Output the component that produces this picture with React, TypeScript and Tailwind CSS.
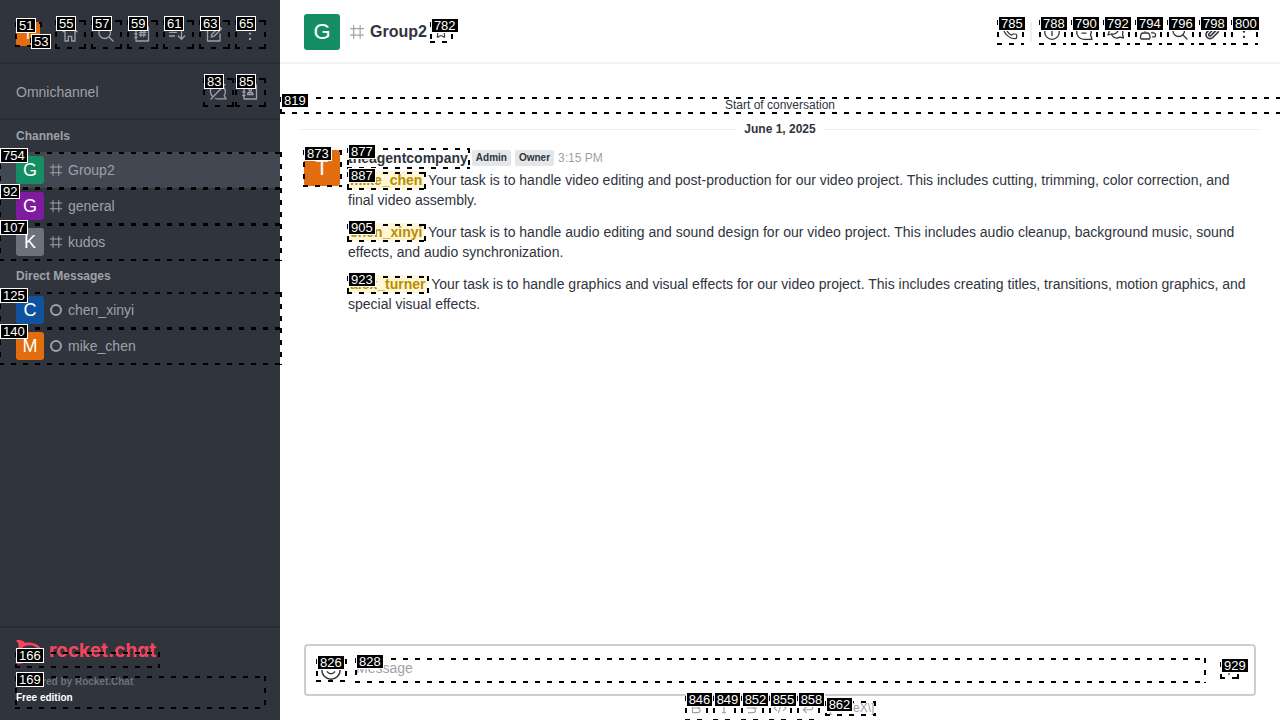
import type { ReactNode } from "react";
import {
  Bold,
  CodeXml,
  CornerDownLeft,
  Paperclip,
  Phone,
  Plus,
  Smile,
  Star,
  Strikethrough,
} from "lucide-react";

/** Dashed outline with a numbered tag, laid over its positioned parent. */
function Mark({ id, box = "-left-px -right-0.5 top-0 -bottom-px" }: { id: number; box?: string }) {
  const across = "absolute left-0 right-0 h-0.5 bg-[repeating-linear-gradient(90deg,#000_0_5px,transparent_5px_12px)]";
  const down = "absolute top-0 bottom-0 w-0.5 bg-[repeating-linear-gradient(180deg,#000_0_5px,transparent_5px_12px)]";
  return (
    <span aria-hidden="true" className={`pointer-events-none absolute ${box}`}>
      <span className={`${across} top-0 z-10`} />
      <span className={`${across} bottom-0 z-10`} />
      <span className={`${down} left-0 z-10`} />
      <span className={`${down} right-0 z-10`} />
      <span className="absolute -top-1 left-px z-20 flex h-[15px] items-center border border-white bg-black px-0.5 font-['Liberation_Sans',Arial,sans-serif] text-[13px] leading-[13px] font-normal text-white">
        {id}
      </span>
    </span>
  );
}

function Icon({ children, className = "size-5" }: { children: ReactNode; className?: string }) {
  return (
    <svg
      viewBox="0 0 20 20"
      className={`shrink-0 ${className}`}
      fill="none"
      stroke="currentColor"
      strokeWidth="1.3"
      strokeLinecap="round"
      strokeLinejoin="round"
      aria-hidden="true"
    >
      {children}
    </svg>
  );
}

const HomeIcon = () => (
  <Icon>
    <path d="M5 7.500H2.800L10 2.800l7.200 4.700H15M5 7.500V17h3.300v-4.700h3.400V17H15V7.500" />
  </Icon>
);
const SearchIcon = () => (
  <Icon>
    <circle cx="8.7" cy="8.7" r="5.8" />
    <path d="m13 13 4 4" />
  </Icon>
);
const DirectoryIcon = () => (
  <Icon>
    <path d="M4 3h12.5v14H4zM2.8 6.5H5M2.8 10H5M2.8 13.5H5M9.2 6.5l-.4 6M12.2 6.5l-.4 6M7.5 8.3H14M7.3 10.8h6.4" />
  </Icon>
);
const SortIcon = () => (
  <Icon>
    <path d="M1.5 4.5h9M1.5 8.3h7M1.5 12h5M13.5 4v11M10.3 12l3.2 3.2 3.2-3.2" />
  </Icon>
);
const EditIcon = () => (
  <Icon>
    <path d="M11 4H3.5v13H16V10M7.3 13l.7-3 7.5-7.2 2 2L10 12.2z" />
  </Icon>
);
const KebabIcon = () => (
  <Icon>
    <g fill="currentColor" stroke="none">
      <circle cx="10" cy="4.3" r="1.2" />
      <circle cx="10" cy="9.6" r="1.2" />
      <circle cx="10" cy="14.9" r="1.2" />
    </g>
  </Icon>
);
const QueueOffIcon = () => (
  <Icon>
    <path d="M5 14.8a6.8 6.8 0 0 1 8.7-11M15.8 5.5a6.8 6.8 0 0 1 .3 8l2 3.3H9.5a7 7 0 0 1-2-.3M17 2.5 3 17" />
  </Icon>
);
const ContactsIcon = () => (
  <Icon>
    <path d="M4 3h12.5v14H4zM2.8 6.5H5M2.8 10H5M2.8 13.5H5M7.5 12.5c0-3 5.5-3 5.5 0z" />
    <circle cx="10.3" cy="7.8" r="1.3" />
  </Icon>
);
const InfoIcon = () => (
  <Icon>
    <circle cx="10" cy="10" r="7.3" />
    <path d="M10 9v4.5M10 6.3v.2" />
  </Icon>
);
const ThreadIcon = () => (
  <Icon>
    <path d="M16.600 13 18 17.300h-8A7.300 7.300 0 1 1 16.600 13zM6.500 8h7M8 11.200h4" />
  </Icon>
);
const DiscussionIcon = () => (
  <Icon>
    <path d="M5.500 12 2 13l1.200-3.500a5 5 0 1 1 7 1.500C8.800 12 7 12.300 5.500 12zM14.500 6.500a5 5 0 0 1 2 6l1 3.500-3.500-.8c-3 1.500-6.500 1-8-2" />
  </Icon>
);
const TeamIcon = () => (
  <Icon>
    <circle cx="7" cy="6.5" r="2.3" />
    <path d="M3.300 17C2 17 2.200 11 5 11h4.500c2.800 0 3 6 1.700 6zM13.500 10.800h2.300c2.200 0 2.200 4 1 4h-2.300" />
    <circle cx="14.2" cy="7" r="1.6" />
  </Icon>
);
const UprightIcon = () => (
  <Icon className="size-3.5">
    <path d="M10 3.500v13M8 3.500h4M8 16.500h4" strokeWidth="1.8" />
  </Icon>
);
const HashIcon = ({ className = "size-4" }: { className?: string }) => (
  <Icon className={className}>
    <path d="M6.300 3v14M13.500 3v14M2.800 6.300h14.400M2.800 13.500h14.400" />
  </Icon>
);

function Avatar({ letter, className }: { letter: string; className: string }) {
  return (
    <span className={`flex shrink-0 items-center justify-center rounded-[3px] leading-none text-white ${className}`}>
      {letter}
    </span>
  );
}

function SideButton({ id, label, children }: { id: number; label: string; children: ReactNode }) {
  return (
    <button type="button" aria-label={label} className="relative flex size-7 items-center justify-center">
      {children}
      <Mark id={id} />
    </button>
  );
}

function HeadButton({ id, label, children }: { id: number; label: string; children: ReactNode }) {
  return (
    <button type="button" aria-label={label} className="relative flex size-6 items-center justify-center">
      {children}
      <Mark id={id} />
    </button>
  );
}

type Room = { id: number; name: string; letter: string; color: string; direct?: boolean; selected?: boolean };

const channels: Room[] = [
  { id: 754, name: "Group2", letter: "G", color: "bg-[#158d65]", selected: true },
  { id: 92, name: "general", letter: "G", color: "bg-[#7f1b9f]" },
  { id: 107, name: "kudos", letter: "K", color: "bg-[#6c727a]" },
];
const directs: Room[] = [
  { id: 125, name: "chen_xinyi", letter: "C", color: "bg-[#10529e]", direct: true },
  { id: 140, name: "mike_chen", letter: "M", color: "bg-[#e26d0e]", direct: true },
];

function RoomList({ title, rooms }: { title: string; rooms: Room[] }) {
  return (
    <section>
      <h2 className="px-4 text-xs leading-8 font-bold">{title}</h2>
      {rooms.map((room) => (
        <a
          key={room.id}
          href={`#${room.name}`}
          className={`relative flex h-9 items-center px-4 ${room.selected ? "bg-[#414852]" : ""}`}
        >
          <Avatar letter={room.letter} className={`size-7 text-lg ${room.color}`} />
          <span className="mr-1 ml-1 flex size-4 items-center justify-center">
            {room.direct ? <span className="size-3 rounded-full border-2 border-current" /> : <HashIcon />}
          </span>
          <span className="text-sm">{room.name}</span>
          <Mark id={room.id} />
        </a>
      ))}
    </section>
  );
}

function Mention({ id, name }: { id: number; name: string }) {
  return (
    <a href={`#${name}`} className="relative rounded-xs bg-[#fff6d6] px-0.5 py-px font-bold text-[#b88d00]">
      {name}
      <Mark id={id} box="-left-px -right-0.5 top-px -bottom-px" />
    </a>
  );
}

const tasks = [
  {
    id: 887,
    name: "mike_chen",
    text: "Your task is to handle video editing and post-production for our video project. This includes cutting, trimming, color correction, and final video assembly.",
  },
  {
    id: 905,
    name: "chen_xinyi",
    text: "Your task is to handle audio editing and sound design for our video project. This includes audio cleanup, background music, sound effects, and audio synchronization.",
  },
  {
    id: 923,
    name: "alex_turner",
    text: "Your task is to handle graphics and visual effects for our video project. This includes creating titles, transitions, motion graphics, and special visual effects.",
  },
];

const formats = [
  { id: 846, label: "Bold", glyph: <Bold className="size-3.5" strokeWidth={2} /> },
  { id: 849, label: "Italic", glyph: <UprightIcon /> },
  { id: 852, label: "Strike", glyph: <Strikethrough className="size-3.5" strokeWidth={2} /> },
  { id: 855, label: "Inline code", glyph: <CodeXml className="size-3.5" strokeWidth={2} /> },
  { id: 858, label: "Multi line", glyph: <CornerDownLeft className="size-3.5" strokeWidth={2} /> },
];

function Sidebar() {
  return (
    <aside className="flex w-[280px] shrink-0 flex-col bg-[#2f343d] text-[#9ea2a8]">
      <div className="flex items-center justify-between border-b-2 border-[#282c34] pt-5 pr-4 pb-3.5 pl-4">
        <button type="button" aria-label="User menu" className="relative">
          <Avatar letter="T" className="size-6 bg-[#e26d0e] text-base" />
          <Mark id={51} />
          <span className="absolute top-4 left-[15px] size-2">
            <Mark id={53} />
          </span>
        </button>
        <div className="flex gap-2">
          <SideButton id={55} label="Home"><HomeIcon /></SideButton>
          <SideButton id={57} label="Search"><SearchIcon /></SideButton>
          <SideButton id={59} label="Directory"><DirectoryIcon /></SideButton>
          <SideButton id={61} label="Sort"><SortIcon /></SideButton>
          <SideButton id={63} label="Create new"><EditIcon /></SideButton>
          <SideButton id={65} label="More"><KebabIcon /></SideButton>
        </div>
      </div>
      <div className="flex items-center justify-between border-b-2 border-[#282c34] px-4 pt-3.5 pb-3">
        <span className="text-sm">Omnichannel</span>
        <div className="flex gap-1">
          <SideButton id={83} label="Turn on answer chats"><QueueOffIcon /></SideButton>
          <SideButton id={85} label="Contact center"><ContactsIcon /></SideButton>
        </div>
      </div>
      <nav className="flex-1">
        <RoomList title="Channels" rooms={channels} />
        <RoomList title="Direct Messages" rooms={directs} />
      </nav>
      <footer className="border-t-2 border-[#282c34] p-4 pt-3 pb-3">
        <a href="#home" className="relative flex h-6 w-[142px] items-start gap-1.5 text-[#f5455c]">
          <svg viewBox="0 0 27 24" className="h-6 w-[27px] shrink-0" fill="none" stroke="currentColor" aria-hidden="true">
            <path d="M0 .5C4-.5 7 .5 9 2.8c8-1.500 16.500 2 16.500 9.200s-8.500 11-16.500 9.200C7 23.500 4 24.500 0 23.500c2.500-2.500 3-4.500 2.500-6.500-2.500-3-2.500-7 0-10C3 5 2.500 3 0 .5z" fill="currentColor" stroke="none" />
            <ellipse cx="13.500" cy="12" rx="9.500" ry="6.800" fill="#2f343d" stroke="none" />
          </svg>
          <span className="font-['Inter',sans-serif] text-[19px] leading-[22px] font-bold [font-feature-settings:'cv11']">rocket.chat</span>
          <Mark id={166} box="-left-px -right-0.5 top-3 -bottom-1" />
        </a>
        <div className="relative mt-3 flex flex-col gap-1 pb-1 text-[10px] leading-3 font-bold">
          <span className="text-[#6c727a]">Powered by Rocket.Chat</span>
          <span className="text-white">Free edition</span>
          <Mark id={169} />
        </div>
      </footer>
    </aside>
  );
}

export default function App() {
  return (
    <div className="flex h-screen overflow-hidden bg-white font-['Liberation_Sans',Arial,sans-serif] text-[#2f343d]">
      <Sidebar />
      <main className="flex min-w-0 flex-1 flex-col">
        <header className="flex items-center justify-between border-b-2 border-[#f2f3f5] px-6 pt-3.5 pb-3">
          <div className="flex items-center">
            <Avatar letter="G" className="size-9 bg-[#158d65] text-[22px]" />
            <span className="mr-1 ml-2 text-[#9ea2a8]"><HashIcon className="size-[18px]" /></span>
            <h1 className="text-base font-bold">Group2</h1>
            <button type="button" aria-label="Favorite" className="relative ml-1 flex size-5 items-center justify-center">
              <Star className="size-3.5" strokeWidth={1.8} />
              <Mark id={782} />
            </button>
          </div>
          <div className="flex items-center gap-2">
            <HeadButton id={785} label="Call"><Phone className="size-4" strokeWidth={1.8} /></HeadButton>
            <span className="h-5 w-0.5 bg-[#eeeff1]" />
            <HeadButton id={788} label="Room information"><InfoIcon /></HeadButton>
            <HeadButton id={790} label="Threads"><ThreadIcon /></HeadButton>
            <HeadButton id={792} label="Discussions"><DiscussionIcon /></HeadButton>
            <HeadButton id={794} label="Members"><TeamIcon /></HeadButton>
            <HeadButton id={796} label="Search messages"><SearchIcon /></HeadButton>
            <HeadButton id={798} label="Files"><Paperclip className="size-4" strokeWidth={2.4} /></HeadButton>
            <HeadButton id={800} label="Options"><KebabIcon /></HeadButton>
          </div>
        </header>

        <div className="flex-1 pt-[33px]">
          <div className="relative text-center text-xs leading-4">
            Start of conversation
            <Mark id={819} box="left-0 -right-0.5 top-0 -bottom-px" />
          </div>
          <div className="mx-5 mt-2 flex items-center gap-2 text-xs leading-4 font-bold">
            <span className="h-px flex-1 bg-[#eeeff1]" />
            <span>June 1, 2025</span>
            <span className="h-px flex-1 bg-[#eeeff1]" />
          </div>
          <article className="mt-[11px] flex gap-2 px-6 text-sm leading-5">
            <div className="relative mt-0.5 size-9 shrink-0">
              <Avatar letter="T" className="size-9 bg-[#e26d0e] text-[22px]" />
              <Mark id={873} />
            </div>
            <div className="min-w-0 flex-1">
              <div className="flex items-center gap-1">
                <a href="#theagentcompany" className="relative font-bold">
                  theagentcompany
                  <Mark id={877} />
                </a>
                <span className="rounded-xs bg-[#e4e7ea] px-1 text-[10px] leading-4 font-bold">Admin</span>
                <span className="rounded-xs bg-[#e4e7ea] px-1 text-[10px] leading-4 font-bold">Owner</span>
                <time className="text-xs text-[#9ea2a8]">3:15 PM</time>
              </div>
              <div className="mt-0.5 flex flex-col gap-3">
                {tasks.map((task) => (
                  <p key={task.id}>
                    <Mention id={task.id} name={task.name} /> {task.text}
                  </p>
                ))}
              </div>
            </div>
          </article>
        </div>

        <footer className="px-6">
          <div className="flex h-[52px] items-center rounded border-2 border-[#cbced1] pr-[17px] pl-[11px]">
            <button type="button" aria-label="Emoji" className="relative flex h-[22px] w-7 items-center justify-center">
              <Smile className="size-[22px]" strokeWidth={1.6} />
              <Mark id={826} />
            </button>
            <div className="relative mr-[17px] ml-[11px] h-6 flex-1">
              <input
                type="text"
                aria-label="Message"
                placeholder="Message"
                className="block h-5 w-full text-sm leading-5 outline-none placeholder:text-[#9ea2a8]"
              />
              <Mark id={828} />
            </div>
            <button type="button" aria-label="Add attachment" className="relative flex size-4 items-center justify-center">
              <Plus className="size-4" strokeWidth={1.6} />
              <Mark id={929} />
            </button>
          </div>
          <div className="flex h-6 items-center justify-center gap-2 text-[#9ea2a8]">
            {formats.map(({ id, label, glyph }) => (
              <button key={id} type="button" aria-label={label} className="relative flex h-6 w-5 items-center justify-center">
                {glyph}
                <Mark id={id} />
              </button>
            ))}
            <a href="#katex" className="relative text-xs leading-[14px]">
              {"\\[KaTeX\\]"}
              <Mark id={862} />
            </a>
          </div>
        </footer>
      </main>
    </div>
  );
}
